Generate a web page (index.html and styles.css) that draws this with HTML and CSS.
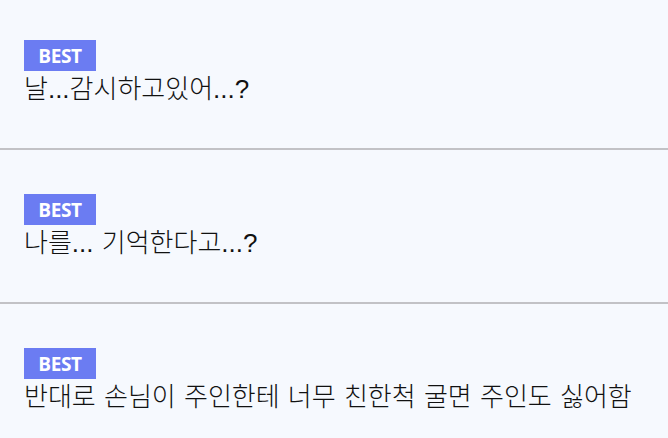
FILE: index.html
```html
<!DOCTYPE html>
<html lang="ko">
<head>
<meta charset="utf-8">
<link rel="stylesheet" href="styles.css">
</head>
<body>
<ul class="list">
  <li class="item">
    <span class="badge">BEST</span>
    <p class="title">날...감시하고있어...?</p>
  </li>
  <li class="item">
    <span class="badge">BEST</span>
    <p class="title">나를... 기억한다고...?</p>
  </li>
  <li class="item">
    <span class="badge">BEST</span>
    <p class="title">반대로 손님이 주인한테 너무 친한척 굴면 주인도 싫어함</p>
  </li>
</ul>
</body>
</html>
```
FILE: styles.css
```css
html, body {
  margin: 0;
  padding: 0;
  background: #f6f9fe;
}
.list {
  list-style: none;
  margin: 0;
  padding: 0;
}
.item {
  display: flex;
  flex-direction: column;
  align-items: flex-start;
  padding: 44px 24px 0;
  height: 108px;
  border-bottom: 2px solid #c2c2c6;
}
.item:first-child {
  padding-top: 40px;
}
.badge {
  display: flex;
  align-items: center;
  justify-content: center;
  width: 72px;
  height: 31px;
  background: #6b7cf2;
  color: #fff;
  font-family: "Open Sans", "Noto Sans", sans-serif;
  font-weight: 700;
  font-size: 19px;
  letter-spacing: -0.4px;
}
.title {
  margin: 0;
  font-family: "Liberation Sans", "Noto Sans CJK KR", sans-serif;
  font-weight: 300;
  font-size: 26px;
  line-height: 36px;
  word-spacing: 1px;
  color: #111;
}
```
